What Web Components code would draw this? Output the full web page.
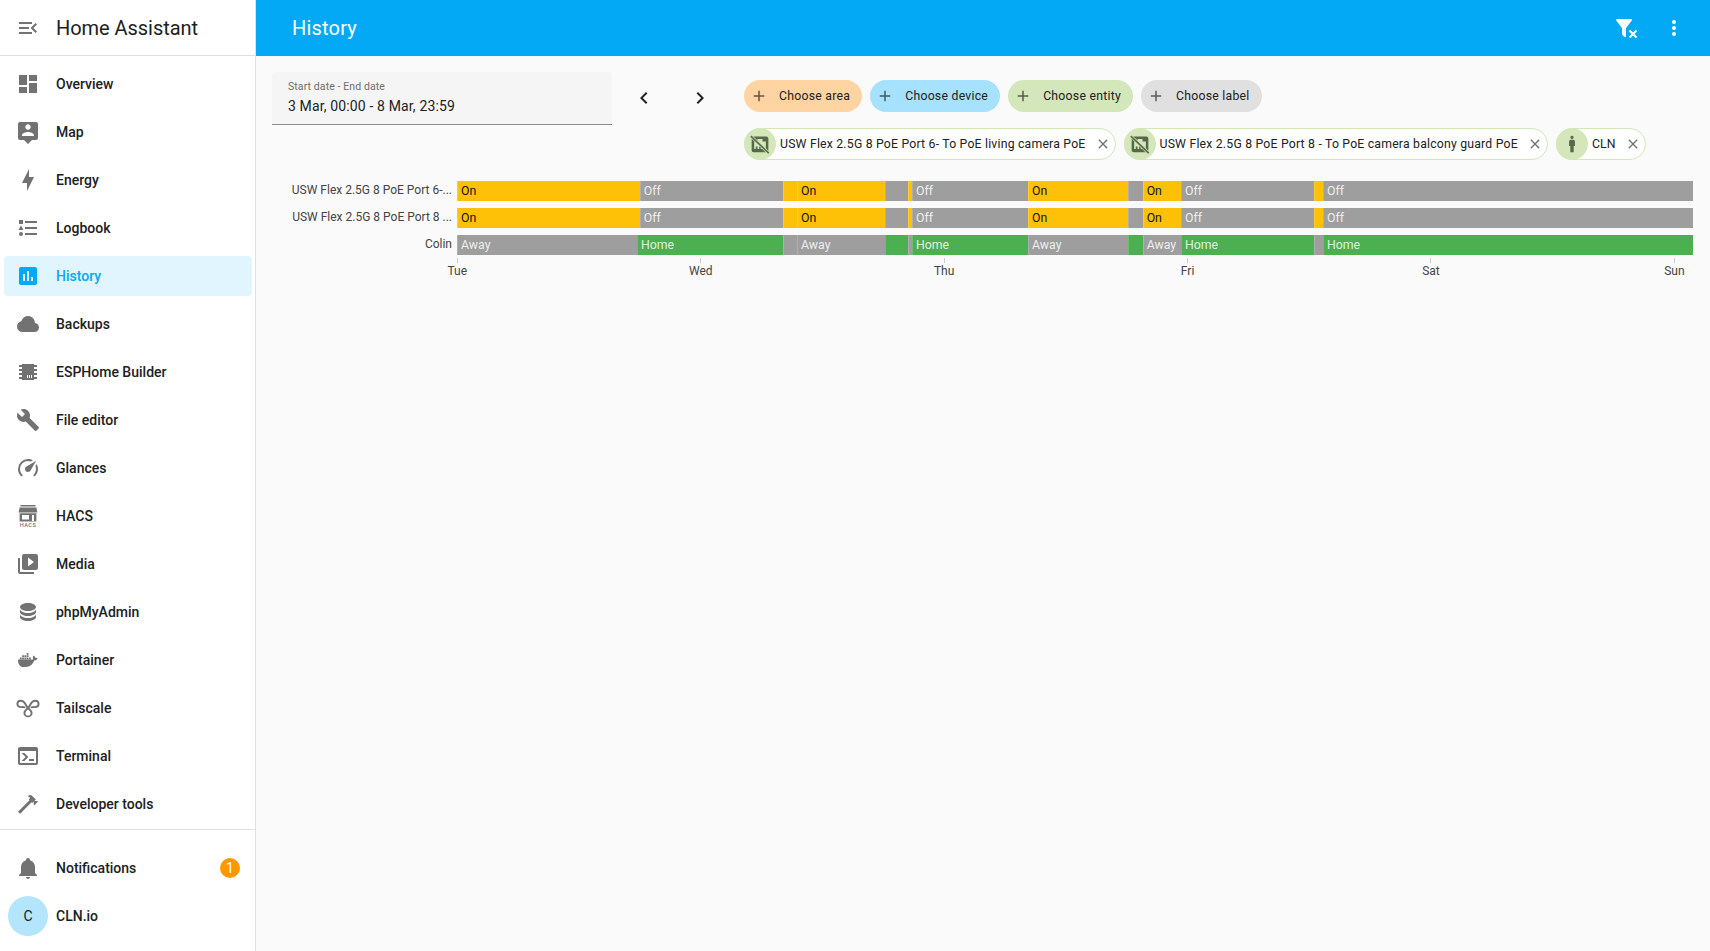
<!DOCTYPE html>
<html lang="en">
<head>
<meta charset="utf-8">
<title>History - Home Assistant</title>
<style>
  html, body { margin: 0; height: 100%; }
  body { font-family: Roboto, "Noto Sans", sans-serif; background: #fafafa; color: #212121; overflow: hidden; }
</style>
</head>
<body>
<ha-shell>
  <ha-sidebar slot="sidebar" title-text="Home Assistant">
    <ha-nav-item icon="dashboard" label="Overview"></ha-nav-item>
    <ha-nav-item icon="map" label="Map"></ha-nav-item>
    <ha-nav-item icon="energy" label="Energy"></ha-nav-item>
    <ha-nav-item icon="logbook" label="Logbook"></ha-nav-item>
    <ha-nav-item icon="history" label="History" active></ha-nav-item>
    <ha-nav-item icon="cloud" label="Backups"></ha-nav-item>
    <ha-nav-item icon="chip" label="ESPHome Builder"></ha-nav-item>
    <ha-nav-item icon="wrench" label="File editor"></ha-nav-item>
    <ha-nav-item icon="speedometer" label="Glances"></ha-nav-item>
    <ha-nav-item icon="hacs" label="HACS"></ha-nav-item>
    <ha-nav-item icon="media" label="Media"></ha-nav-item>
    <ha-nav-item icon="database" label="phpMyAdmin"></ha-nav-item>
    <ha-nav-item icon="docker" label="Portainer"></ha-nav-item>
    <ha-nav-item icon="tailscale" label="Tailscale"></ha-nav-item>
    <ha-nav-item icon="console" label="Terminal"></ha-nav-item>
    <ha-nav-item icon="hammer" label="Developer tools"></ha-nav-item>
    <ha-nav-item slot="footer" icon="bell" label="Notifications" badge="1"></ha-nav-item>
    <ha-nav-item slot="footer" avatar="C" label="CLN.io"></ha-nav-item>
  </ha-sidebar>
  <ha-topbar slot="topbar" title-text="History"></ha-topbar>
  <history-panel></history-panel>
</ha-shell>

<script>
const PATHS = {
  menuOpen: "M21,15.61L19.59,17L14.58,12L19.59,7L21,8.39L17.44,12L21,15.61M3,6H16V8H3V6M3,13V11H13V13H3M3,18V16H16V18H3Z",
  dashboard: "M13,3V9H21V3M13,21H21V11H13M3,21H11V15H3M3,13H11V3H3V13Z",
  map: "M20 2H4C2.9 2 2 2.9 2 4V18C2 19.1 2.9 20 4 20H8L12 24L16 20H20C21.1 20 22 19.1 22 18V4C22 2.9 21.1 2 20 2M12 4.3C13.5 4.3 14.7 5.5 14.7 7S13.5 9.7 12 9.7 9.3 8.5 9.3 7 10.5 4.3 12 4.3M18 16H6V15.1C6 13.1 10 12 12 12S18 13.1 18 15.1V16Z",
  energy: "M11 15H6L13 1V9H18L11 23V15Z",
  logbook: "M5,9.5L7.5,14H2.5L5,9.5M3,4H7V8H3V4M5,20A2,2 0 0,0 7,18A2,2 0 0,0 5,16A2,2 0 0,0 3,18A2,2 0 0,0 5,20M9,5V7H21V5H9M9,19H21V17H9V19M9,13H21V11H9V13Z",
  history: "M19,3H5C3.89,3 3,3.89 3,5V19A2,2 0 0,0 5,21H19A2,2 0 0,0 21,19V5C21,3.89 20.1,3 19,3M9,17H7V10H9V17M13,17H11V7H13V17M17,17H15V13H17V17Z",
  cloud: "M6.5 20Q4.22 20 2.61 18.43 1 16.85 1 14.58 1 12.63 2.17 11.1 3.35 9.57 5.25 9.15 5.88 6.85 7.75 5.43 9.63 4 12 4 14.93 4 16.96 6.04 19 8.07 19 11 20.73 11.2 21.86 12.5 23 13.78 23 15.5 23 17.38 21.69 18.69 20.38 20 18.5 20Z",
  chip: "M6,4H18V5H21V7H18V9H21V11H18V13H21V15H18V17H21V19H18V20H6V19H3V17H6V15H3V13H6V11H3V9H6V7H3V5H6V4M11,15V18H12V15H11M13,15V18H14V15H13M15,15V18H16V15H15Z",
  wrench: "M22.7,19L13.6,9.9C14.5,7.6 14,4.9 12.1,3C10.1,1 7.1,0.6 4.7,1.7L9,6L6,9L1.6,4.7C0.4,7.1 0.9,10.1 2.9,12.1C4.8,14 7.5,14.5 9.8,13.6L18.9,22.7C19.3,23.1 19.9,23.1 20.3,22.7L22.6,20.4C23.1,20 23.1,19.3 22.7,19Z",
  speedometer: "M12,16A3,3 0 0,1 9,13C9,11.88 9.61,10.9 10.5,10.39L20.21,4.77L14.68,14.35C14.18,15.33 13.17,16 12,16M12,3C13.81,3 15.5,3.5 16.97,4.32L14.87,5.53C14,5.19 13,5 12,5A8,8 0 0,0 4,13C4,15.21 4.89,17.21 6.34,18.65H6.35C6.74,19.04 6.74,19.67 6.35,20.06C5.96,20.45 5.32,20.45 4.93,20.07V20.07C3.12,18.26 2,15.76 2,13A10,10 0 0,1 12,3M22,13C22,15.76 20.88,18.26 19.07,20.07V20.07C18.68,20.45 18.05,20.45 17.66,20.06C17.27,19.67 17.27,19.04 17.66,18.65V18.65C19.11,17.2 20,15.21 20,13C20,12 19.81,11 19.46,10.1L20.67,8C21.5,9.5 22,11.18 22,13Z",
  media: "M4,6H2V20A2,2 0 0,0 4,22H18V20H4M20,2H8A2,2 0 0,0 6,4V16A2,2 0 0,0 8,18H20A2,2 0 0,0 22,16V4A2,2 0 0,0 20,2M12,14.5V5.5L18,10L12,14.5Z",
  database: "M12,3C7.58,3 4,4.79 4,7C4,9.21 7.58,11 12,11C16.42,11 20,9.21 20,7C20,4.79 16.42,3 12,3M4,9V12C4,14.21 7.58,16 12,16C16.42,16 20,14.21 20,12V9C20,11.21 16.42,13 12,13C7.58,13 4,11.21 4,9M4,14V17C4,19.21 7.58,21 12,21C16.42,21 20,19.21 20,17V14C20,16.21 16.42,18 12,18C7.58,18 4,16.21 4,14Z",
  docker: "M21.81 10.25C21.75 10.21 21.25 9.82 20.17 9.82C19.89 9.82 19.61 9.85 19.33 9.9C19.12 8.5 17.95 7.79 17.9 7.76L17.61 7.59L17.43 7.86C17.19 8.22 17 8.62 16.91 9.05C16.71 9.85 16.83 10.61 17.24 11.26C16.75 11.53 15.96 11.6 15.8 11.6H2.62C2.28 11.6 2 11.88 2 12.22C2 13.36 2.18 14.5 2.57 15.58C3 16.74 3.67 17.6 4.5 18.13C5.44 18.7 6.97 19 8.71 19C9.5 19 10.28 18.93 11.06 18.79C12.14 18.6 13.17 18.22 14.12 17.68C14.9 17.23 15.61 16.65 16.2 16C17.19 14.85 17.78 13.59 18.2 12.47H18.37C19.46 12.47 20.13 12.04 20.5 11.67C20.75 11.44 20.94 11.16 21.07 10.84L21.15 10.61L21.81 10.25M3.85 11.31H5.66V9.5H3.85V11.31M6.12 11.31H7.93V9.5H6.12V11.31M8.39 11.31H10.2V9.5H8.39V11.31M10.66 11.31H12.47V9.5H10.66V11.31M12.93 11.31H14.74V9.5H12.93V11.31M6.12 9.04H7.93V7.23H6.12V9.04M8.39 9.04H10.2V7.23H8.39V9.04M10.66 9.04H12.47V7.23H10.66V9.04M10.66 6.77H12.47V4.96H10.66V6.77Z",
  console: "M20,19V7H4V19H20M20,3A2,2 0 0,1 22,5V19A2,2 0 0,1 20,21H4A2,2 0 0,1 2,19V5C2,3.89 2.9,3 4,3H20M13,17V15H18V17H13M9.58,13L5.57,9H8.4L11.7,12.3C12.09,12.69 12.09,13.33 11.7,13.72L8.42,17H5.59L9.58,13Z",
  hammer: "M2 19.63L13.43 8.2L12.72 7.5L14.14 6.07L12 3.89C13.2 2.7 15.09 2.7 16.27 3.89L19.87 7.5L18.45 8.91H21.29L22 9.62L18.45 13.21L17.74 12.5V9.62L16.27 11.04L15.56 10.33L4.13 21.76L2 19.63Z",
  bell: "M21,19V20H3V19L5,17V11C5,7.9 7.03,5.17 10,4.29C10,4.19 10,4.1 10,4A2,2 0 0,1 12,2A2,2 0 0,1 14,4C14,4.1 14,4.19 14,4.29C16.97,5.17 19,7.9 19,11V17L21,19M14,21A2,2 0 0,1 12,23A2,2 0 0,1 10,21",
  filterRemove: "M14.76,20.83L17.6,18L14.76,15.17L16.17,13.76L19,16.57L21.83,13.76L23.24,15.17L20.43,18L23.24,20.83L21.83,22.24L19,19.4L16.17,22.24L14.76,20.83M12,12V19.88C12.04,20.18 11.94,20.5 11.71,20.71C11.32,21.1 10.69,21.1 10.3,20.71L8.29,18.7C8.06,18.47 7.96,18.16 8,17.87V12H7.97L2.21,4.62C1.87,4.19 1.95,3.56 2.38,3.22C2.57,3.08 2.78,3 3,3V3H17V3C17.22,3 17.43,3.08 17.62,3.22C18.05,3.56 18.13,4.19 17.79,4.62L12.03,12H12Z",
  dots: "M12,16A2,2 0 0,1 14,18A2,2 0 0,1 12,20A2,2 0 0,1 10,18A2,2 0 0,1 12,16M12,10A2,2 0 0,1 14,12A2,2 0 0,1 12,14A2,2 0 0,1 10,12A2,2 0 0,1 12,10M12,4A2,2 0 0,1 14,6A2,2 0 0,1 12,8A2,2 0 0,1 10,6A2,2 0 0,1 12,4Z",
  left: "M15.41,16.58L10.83,12L15.41,7.41L14,6L8,12L14,18L15.41,16.58Z",
  right: "M8.59,16.58L13.17,12L8.59,7.41L10,6L16,12L10,18L8.59,16.58Z",
  plus: "M19,13H13V19H11V13H5V11H11V5H13V11H19V13Z",
  close: "M19,6.41L17.59,5L12,10.59L6.41,5L5,6.41L10.59,12L5,17.59L6.41,19L12,13.41L17.59,19L19,17.59L13.41,12L19,6.41Z",
  human: "M12,2A2,2 0 0,1 14,4A2,2 0 0,1 12,6A2,2 0 0,1 10,4A2,2 0 0,1 12,2M10.5,7H13.5A2,2 0 0,1 15.5,9V14.5H14V22H10V14.5H8.5V9A2,2 0 0,1 10.5,7Z"
};

function svgIcon(name, size = 24) {
  let inner = `<path d="${PATHS[name] || ""}"/>`;
  if (name === "tailscale") {
    inner = `<path fill="none" stroke="currentColor" stroke-width="1.9" stroke-linecap="round" d="M8.6 11.3C7.4 10.9 6.2 11.1 4.9 11.1C2.8 11.1 1.4 9.7 1.4 8C1.4 6.1 2.9 4.7 4.9 4.7C7.7 4.7 9.3 7.4 10.5 10C11.8 12.8 15.6 14 15.6 16.9C15.6 18.9 14 20.4 12 20.4C10 20.4 8.4 18.9 8.4 16.9C8.4 14 12.2 12.8 13.5 10C14.7 7.4 16.3 4.7 19.1 4.7C21.1 4.7 22.6 6.1 22.6 8C22.6 9.7 21.2 11.1 19.1 11.1C17.8 11.1 16.6 10.9 15.4 11.3"/>`;
  }
  if (name === "hacs") {
    inner = `<path d="M4.5 1H19.5V2.6H4.5ZM3.6 3.6H20.4L21.4 8.4H2.6ZM3.6 9.2H20.4V17.4H3.6ZM6 11V15.4H13V11ZM16 11V17H18V11Z"/>
      <text x="12" y="23.4" text-anchor="middle" font-family="Roboto, sans-serif" font-size="5.6" font-weight="500" letter-spacing=".5" fill="currentColor">HACS</text>`;
  }
  if (name === "ethernetOff") {
    inner = `<path d="M4.4,3H19.6C20.9,3 22,4.1 22,5.4V19.6C22,20.9 20.9,22 19.6,22H4.4C3.1,22 2,20.9 2,19.6V5.4C2,4.1 3.1,3 4.4,3M7,15H9V18H11V15H13V18H15V15H17V18H19V9H15V6H9V9H5V18H7Z"/>
      <path d="M1,2.5L22.5,23" stroke="#d3e7ba" stroke-width="3.6" fill="none"/>
      <path d="M1,2.5L22.5,23" stroke="currentColor" stroke-width="1.9" fill="none"/>`;
  }
  return `<svg width="${size}" height="${size}" viewBox="0 0 24 24" fill="currentColor" aria-hidden="true">${inner}</svg>`;
}

class HaShell extends HTMLElement {
  constructor() {
    super();
    this.attachShadow({ mode: "open" }).innerHTML = `
      <style>
        :host { display: grid; grid-template-columns: 256px 1fr; grid-template-rows: 56px 1fr; height: 100vh; }
        ::slotted([slot="sidebar"]) { grid-row: 1 / 3; }
        main { min-width: 0; }
      </style>
      <slot name="sidebar"></slot>
      <slot name="topbar"></slot>
      <main><slot></slot></main>`;
  }
}

class HaSidebar extends HTMLElement {
  constructor() {
    super();
    this.attachShadow({ mode: "open" }).innerHTML = `
      <style>
        :host { display: flex; flex-direction: column; background: #fff; border-right: 1px solid #e0e0e0; box-sizing: border-box; height: 100%; }
        header { height: 56px; box-sizing: border-box; display: flex; align-items: center; border-bottom: 1px solid #e0e0e0; color: #727272; padding-left: 16px; flex: none; }
        header span { margin-left: 16px; font-size: 20px; color: #212121; letter-spacing: -.05px; }
        svg { display: block; }
        nav { padding: 4px 0 1px; }
        .footer { border-top: 1px solid #e0e0e0; padding-top: 14px; }
      </style>
      <header>${svgIcon("menuOpen")}<span>${this.getAttribute("title-text")}</span></header>
      <nav><slot></slot></nav>
      <div class="footer"><slot name="footer"></slot></div>`;
  }
}

class HaNavItem extends HTMLElement {
  constructor() {
    super();
    const avatar = this.getAttribute("avatar");
    const badge = this.getAttribute("badge");
    const lead = avatar
      ? `<span class="avatar">${avatar}</span>`
      : `<span class="icon">${svgIcon(this.getAttribute("icon"))}</span>`;
    this.attachShadow({ mode: "open" }).innerHTML = `
      <style>
        :host { display: block; padding: 4px 3px 4px 4px; }
        a { height: 40px; display: flex; align-items: center; padding-left: 12px; border-radius: 4px; font-size: 14px; font-weight: 500; color: #212121; }
        :host([active]) a { background: #e1f5fe; color: #03a9f4; }
        .icon { width: 24px; height: 24px; color: #727272; flex: none; }
        :host([active]) .icon { color: #03a9f4; }
        svg { display: block; }
        .label { margin-left: 16px; flex: 1; }
        .avatar { width: 40px; height: 40px; margin-left: -8px; margin-right: -8px; border-radius: 50%; background: #b3e5fc; flex: none; display: flex; align-items: center; justify-content: center; font-weight: 400; font-size: 14px; }
        .badge { width: 20px; height: 20px; border-radius: 50%; background: #ff9800; color: #fff; font-size: 14px; font-weight: 400; display: flex; align-items: center; justify-content: center; margin-right: 12px; }
      </style>
      <a>${lead}<span class="label">${this.getAttribute("label")}</span>${badge ? `<span class="badge">${badge}</span>` : ""}</a>`;
  }
}

class HaTopbar extends HTMLElement {
  constructor() {
    super();
    this.attachShadow({ mode: "open" }).innerHTML = `
      <style>
        :host { display: flex; align-items: center; background: #03a9f4; color: #fff; height: 56px; padding: 0 12px 0 36px; }
        h1 { flex: 1; margin: 0; font-size: 20px; font-weight: 400; letter-spacing: .2px; }
        button { all: unset; width: 48px; height: 48px; display: flex; align-items: center; justify-content: center; }
        svg { display: block; }
      </style>
      <h1>${this.getAttribute("title-text")}</h1>
      <button>${svgIcon("filterRemove")}</button>
      <button>${svgIcon("dots")}</button>`;
  }
}

class HaDateField extends HTMLElement {
  constructor() {
    super();
    this.attachShadow({ mode: "open" }).innerHTML = `
      <style>
        :host { display: block; flex: none; width: 340px; height: 53px; box-sizing: border-box; background: #f5f5f5; border-bottom: 1px solid #8c8c8c; border-radius: 4px 4px 0 0; padding: 9px 16px 0; }
        .label { font-size: 10.5px; line-height: 12px; color: #6f6f6f; letter-spacing: .1px; }
        .value { font-size: 14px; line-height: 20px; margin-top: 3px; color: #212121; letter-spacing: .14px; }
      </style>
      <div class="label">${this.getAttribute("label")}</div>
      <div class="value">${this.getAttribute("value")}</div>`;
  }
}

class HaAddChip extends HTMLElement {
  constructor() {
    super();
    this.attachShadow({ mode: "open" }).innerHTML = `
      <style>
        :host { display: inline-flex; align-items: center; height: 32px; border-radius: 16px; padding: 0 12px 0 6px; background: var(--chip-bg); font-size: 12.25px; letter-spacing: .25px; white-space: nowrap; }
        .i { color: rgba(0,0,0,.6); width: 18px; height: 18px; margin-right: 11px; }
        svg { display: block; }
      </style>
      <span class="i">${svgIcon("plus", 18)}</span><span>${this.getAttribute("label")}</span>`;
  }
}

class HaEntityChip extends HTMLElement {
  constructor() {
    super();
    this.attachShadow({ mode: "open" }).innerHTML = `
      <style>
        :host { display: inline-flex; align-items: center; height: 32px; box-sizing: border-box; border-radius: 16px; border: 1px solid #d3e7ba; background: #fff; font-size: 12.25px; letter-spacing: .2px; white-space: nowrap; flex: none; }
        .i { width: 32px; height: 32px; margin-left: -1px; border-radius: 50%; background: #d3e7ba; color: #56694a; display: flex; align-items: center; justify-content: center; flex: none; }
        .t { margin-left: 4px; }
        .x { margin: 0 4px 0 9px; color: #727272; width: 16px; height: 16px; }
        svg { display: block; }
      </style>
      <span class="i">${svgIcon(this.getAttribute("icon"), 20)}</span>
      <span class="t">${this.getAttribute("label")}</span>
      <span class="x">${svgIcon("close", 16)}</span>`;
  }
}

class HistoryTimeline extends HTMLElement {
  constructor() {
    super();
    this.attachShadow({ mode: "open" });
  }
  set data(d) {
    this._d = d;
    this.render();
  }
  render() {
    const { rows, days, start, end } = this._d;
    const colors = { On: "#ffc107", Off: "#9e9e9e", Away: "#9e9e9e", Home: "#4caf50" };
    const rowHtml = rows.map((r) => {
      let prev = start;
      const segs = r.segments.map(([state, to, hide]) => {
        const pct = ((to - prev) / (end - start)) * 100;
        prev = to;
        return `<span class="seg ${state === "On" ? "dark" : ""}" style="flex:0 0 ${pct}%;background:${colors[state]}">${hide ? "" : `<b>${state}</b>`}</span>`;
      }).join("");
      return `<div class="name">${r.name}</div><div class="bar">${segs}</div>`;
    }).join("");
    this.shadowRoot.innerHTML = `
      <style>
        :host { display: grid; grid-template-columns: 185px 1fr; row-gap: 6.7px; font-size: 12px; }
        .name { text-align: right; padding-right: 5px; color: #444; white-space: nowrap; line-height: 18px; }
        .bar { display: flex; height: 20px; margin-right: 1px; }
        .seg { min-width: 0; white-space: nowrap; color: rgba(255,255,255,.85); line-height: 20px; box-shadow: inset 1px 0 rgba(255,255,255,.18); }
        .seg b { font-weight: 400; font-size: 12.3px; margin-left: 4px; }
        .seg.dark { color: #111; }
        .axis { grid-column: 2; display: flex; justify-content: space-between; margin: -3.8px 19.6px 0 .3px; }
        .tick { width: 0; display: flex; flex-direction: column; align-items: center; color: #444; }
        .tick i { width: 1px; height: 5px; background: #ccc; flex: none; }
        .tick span { margin-top: 1px; line-height: 14px; }
      </style>
      ${rowHtml}
      <div class="axis">${days.map((d) => `<div class="tick"><i></i><span>${d}</span></div>`).join("")}</div>`;
  }
}

class HistoryPanel extends HTMLElement {
  constructor() {
    super();
    this.attachShadow({ mode: "open" }).innerHTML = `
      <style>
        :host { display: block; padding: 16px 16px 0; }
        .filters { display: flex; align-items: flex-start; gap: 8px; }
        button { all: unset; width: 48px; height: 48px; margin-top: 2px; flex: none; display: flex; align-items: center; justify-content: center; color: #212121; }
        svg { display: block; }
        .chips { margin-left: 12px; padding-top: 8px; display: flex; flex-direction: column; gap: 16px; }
        .row { display: flex; gap: 8px; }
        history-timeline { margin-top: 21.3px; }
      </style>
      <div class="filters">
        <ha-date-field label="Start date - End date" value="3 Mar, 00:00 - 8 Mar, 23:59"></ha-date-field>
        <button>${svgIcon("left")}</button>
        <button>${svgIcon("right")}</button>
        <div class="chips">
          <div class="row">
            <ha-add-chip label="Choose area" style="--chip-bg:#ffd4a3"></ha-add-chip>
            <ha-add-chip label="Choose device" style="--chip-bg:#a6e1fd"></ha-add-chip>
            <ha-add-chip label="Choose entity" style="--chip-bg:#d3e7ba"></ha-add-chip>
            <ha-add-chip label="Choose label" style="--chip-bg:#e0e0e0"></ha-add-chip>
          </div>
          <div class="row">
            <ha-entity-chip icon="ethernetOff" label="USW Flex 2.5G 8 PoE Port 6- To PoE living camera PoE"></ha-entity-chip>
            <ha-entity-chip icon="ethernetOff" label="USW Flex 2.5G 8 PoE Port 8 - To PoE camera balcony guard PoE"></ha-entity-chip>
            <ha-entity-chip icon="human" label="CLN"></ha-entity-chip>
          </div>
        </div>
      </div>
      <history-timeline></history-timeline>`;
    const port = [
      ["On", 639.7], ["Off", 783], ["On", 797, true], ["On", 885], ["Off", 907.7, true], ["On", 912, true],
      ["Off", 1028], ["On", 1127.7], ["Off", 1142.7, true], ["On", 1181], ["Off", 1314], ["On", 1323, true], ["Off", 1693]
    ];
    const person = [
      ["Away", 637], ["Home", 783], ["Away", 797, true], ["Away", 885], ["Home", 907.7, true], ["Away", 912, true],
      ["Home", 1028], ["Away", 1127.7], ["Home", 1142.7, true], ["Away", 1181], ["Home", 1314], ["Away", 1323, true], ["Home", 1693]
    ];
    this.shadowRoot.querySelector("history-timeline").data = {
      start: 457,
      end: 1693,
      days: ["Tue", "Wed", "Thu", "Fri", "Sat", "Sun"],
      rows: [
        { name: "USW Flex 2.5G 8 PoE Port 6-...", segments: port },
        { name: "USW Flex 2.5G 8 PoE Port 8 ...", segments: port },
        { name: "Colin", segments: person }
      ]
    };
  }
}

customElements.define("ha-date-field", HaDateField);
customElements.define("ha-add-chip", HaAddChip);
customElements.define("ha-entity-chip", HaEntityChip);
customElements.define("history-timeline", HistoryTimeline);
customElements.define("history-panel", HistoryPanel);
customElements.define("ha-nav-item", HaNavItem);
customElements.define("ha-sidebar", HaSidebar);
customElements.define("ha-topbar", HaTopbar);
customElements.define("ha-shell", HaShell);
</script>
</body>
</html>
